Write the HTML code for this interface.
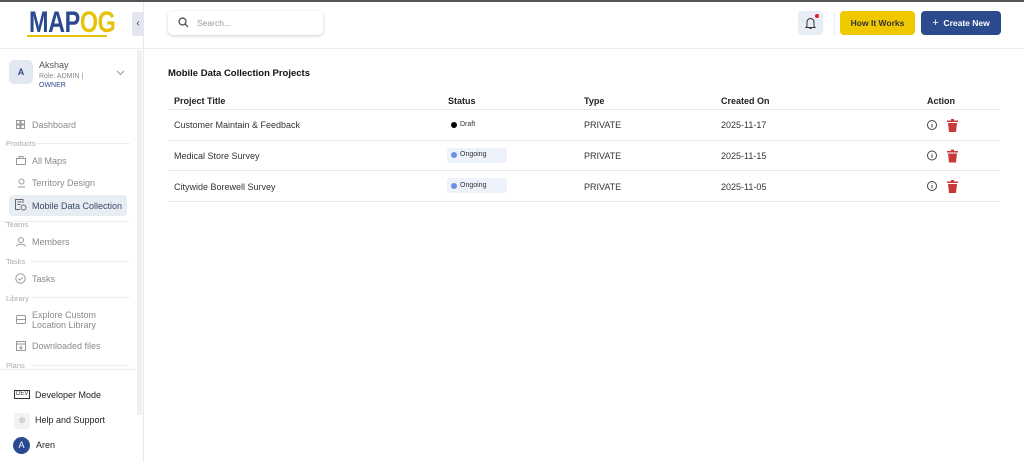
<!DOCTYPE html>
<html><head><style>
*{box-sizing:border-box;margin:0;padding:0}
body{width:1024px;height:462px;overflow:hidden;font-family:"Liberation Sans",sans-serif;background:#fff;position:relative;color:#222}
.a{position:absolute}
.side{left:0;top:0;width:144px;height:462px;border-right:1px solid #e8e8e8;background:#fff}
.nav{font-size:9px;color:#8a8a8a;white-space:nowrap}
.sec{font-size:7.5px;color:#aaa}
.hr{height:1px;background:#eee}
.th{font-size:9px;font-weight:bold;color:#222}
.td{font-size:9px;color:#333}
.rowline{left:168px;width:832px;height:1px;background:#e6e6e6}
.ic{position:absolute;fill:none;stroke:#999;stroke-width:1}
</style></head><body>
<div class="a side"></div>
<div class="a" style="left:0;top:0;width:1024px;height:2px;background:#555"></div>
<div class="a" style="left:29px;top:8px;font-size:30px;font-weight:bold;color:#2a4a8f;letter-spacing:-0.5px;transform:scaleX(0.78);transform-origin:left;line-height:30px">MAP<span style="color:#e8c20a">OG</span></div>
<div class="a" style="left:27px;top:35px;width:80px;height:1.5px;background:#e8c20a"></div>
<div class="a" style="left:132px;top:12px;width:12px;height:24px;background:#e3e6ee;border-radius:3px 0 0 3px;font-size:10px;text-align:center;line-height:24px;color:#333">‹</div>
<div class="a" style="left:0;top:48px;width:143px;height:1px;background:#eee"></div>
<div class="a" style="left:9px;top:60px;width:24px;height:24px;background:#e3e7f2;border-radius:5px;font-size:9px;font-weight:bold;color:#2a4a8f;text-align:center;line-height:24px">A</div>
<div class="a" style="left:39px;top:60px;font-size:9px;color:#555">Akshay</div>
<div class="a" style="left:39px;top:72px;font-size:7px;color:#888;line-height:9px">Role: ADMIN |<br><span style="color:#2a4a8f">OWNER</span></div>
<svg class="ic" style="left:116px;top:70px" width="9" height="6"><path d="M1 1l3.5 3.5L8 1"/></svg>

<svg class="ic" style="left:16px;top:120px" width="9" height="9"><rect x=".5" y=".5" width="3.5" height="3.5"/><rect x="5" y=".5" width="3.5" height="3.5"/><rect x=".5" y="5" width="3.5" height="3.5"/><rect x="5" y="5" width="3.5" height="3.5"/></svg>
<div class="a nav" style="left:32px;top:120px">Dashboard</div>
<div class="a sec" style="left:6px;top:139px">Products</div><div class="a hr" style="left:36px;top:143px;width:94px"></div>
<svg class="ic" style="left:16px;top:156px" width="10" height="9"><rect x=".5" y="2.5" width="9" height="6"/><path d="M3 2.5V.5h4v2"/></svg>
<div class="a nav" style="left:32px;top:156px">All Maps</div>
<svg class="ic" style="left:17px;top:178px" width="9" height="10"><circle cx="4.5" cy="3.5" r="2.5"/><path d="M1 9h7"/></svg>
<div class="a nav" style="left:32px;top:178px">Territory Design</div>
<div class="a" style="left:9px;top:195px;width:118px;height:21px;background:#e8ecf3;border-radius:4px"></div>
<svg class="ic" style="left:15px;top:199px;stroke:#667" width="12" height="12"><path d="M8 4V.5H.5v10H5M2.5 3h4M2.5 5.5h3"/><circle cx="8.5" cy="8.5" r="2.5"/></svg>
<div class="a nav" style="left:32px;top:201px;color:#3a4a6a">Mobile Data Collection</div>
<div class="a hr" style="left:0;top:221px;width:130px"></div>
<div class="a sec" style="left:6px;top:220px">Teams</div>
<svg class="ic" style="left:16px;top:237px" width="10" height="10"><circle cx="5" cy="3" r="2.5"/><path d="M.5 9.5c0-3 9-3 9 0"/></svg>
<div class="a nav" style="left:32px;top:237px">Members</div>
<div class="a sec" style="left:6px;top:257px">Tasks</div><div class="a hr" style="left:30px;top:261px;width:100px"></div>
<svg class="ic" style="left:15px;top:273px" width="11" height="11"><circle cx="5.5" cy="5.5" r="4.7"/><path d="M3.3 5.6l1.6 1.6 3-3"/></svg>
<div class="a nav" style="left:32px;top:274px">Tasks</div>
<div class="a sec" style="left:6px;top:294px">Library</div><div class="a hr" style="left:32px;top:297px;width:98px"></div>
<svg class="ic" style="left:16px;top:315px" width="10" height="9"><rect x=".5" y=".5" width="9" height="8" rx="1"/><path d="M.5 4.5h9"/></svg>
<div class="a nav" style="left:32px;top:310px;line-height:10px">Explore Custom<br>Location Library</div>
<svg class="ic" style="left:16px;top:341px" width="10" height="10"><rect x=".5" y=".5" width="9" height="9"/><path d="M.5 3h9M5 4.5v3.5M3.5 6.5L5 8l1.5-1.5"/></svg>
<div class="a nav" style="left:32px;top:341px">Downloaded files</div>
<div class="a sec" style="left:6px;top:361px">Plans</div><div class="a hr" style="left:30px;top:365px;width:100px"></div>
<div class="a hr" style="left:0;top:369px;width:136px"></div>
<div class="a" style="left:14px;top:390px;font-size:6px;border:1px solid #333;padding:0 1px;color:#333;line-height:7px">DEV</div>
<div class="a" style="left:35px;top:390px;font-size:9px;color:#222">Developer Mode</div>
<div class="a" style="left:14px;top:413px;width:16px;height:16px;background:#f2f2f2;border-radius:3px;font-size:7px;text-align:center;line-height:16px;color:#888">◎</div>
<div class="a" style="left:35px;top:415px;font-size:9px;color:#222">Help and Support</div>
<div class="a" style="left:13px;top:437px;width:17px;height:17px;background:#2a4a8f;border-radius:50%;font-size:9px;color:#fff;text-align:center;line-height:17px">A</div>
<div class="a" style="left:36px;top:440px;font-size:9px;color:#222">Aren</div>
<div class="a" style="left:137px;top:50px;width:5px;height:365px;background:#f0f0f0"></div>

<div class="a" style="left:144px;top:48px;width:880px;height:1px;background:#eee"></div>
<div class="a" style="left:168px;top:11px;width:155px;height:24px;border-radius:5px;box-shadow:0 1px 3px rgba(0,0,0,.2);background:#fff"></div>
<svg class="ic" style="left:178px;top:17px;stroke:#444;stroke-width:1.2" width="11" height="11"><circle cx="4.5" cy="4.5" r="3.5"/><path d="M7 7l3 3"/></svg>
<div class="a" style="left:197px;top:18px;font-size:8.5px;color:#999">Search...</div>
<div class="a" style="left:798px;top:11px;width:25px;height:24px;background:#e8ecf7;border-radius:4px"></div>
<svg class="ic" style="left:804px;top:16px;stroke:#333" width="13" height="14"><path d="M3 10V6a3.5 3.5 0 017 0v4l1 1.5H2zM5.5 12.5h2"/></svg>
<div class="a" style="left:815px;top:14px;width:4px;height:4px;border-radius:50%;background:#d22"></div>
<div class="a" style="left:834px;top:12px;width:1px;height:24px;background:#eee"></div>
<div class="a" style="left:840px;top:11px;width:75px;height:24px;background:#f0c800;border-radius:4px;font-size:8.5px;font-weight:bold;color:#333;text-align:center;line-height:24px">How It Works</div>
<div class="a" style="left:921px;top:11px;width:80px;height:24px;background:#2b4b8e;border-radius:4px;font-size:8.5px;font-weight:bold;color:#fff;text-align:center;line-height:24px"><span style="font-weight:normal;font-size:11px">+</span>&nbsp; Create New</div>

<div class="a" style="left:168px;top:68px;font-size:9.5px;font-weight:bold;color:#111">Mobile Data Collection Projects</div>
<div class="a th" style="left:174px;top:96px">Project Title</div>
<div class="a th" style="left:448px;top:96px">Status</div>
<div class="a th" style="left:584px;top:96px">Type</div>
<div class="a th" style="left:721px;top:96px">Created On</div>
<div class="a th" style="left:927px;top:96px">Action</div>
<div class="a rowline" style="top:109px"></div>
<div class="a rowline" style="top:140px"></div>
<div class="a rowline" style="top:170px"></div>
<div class="a rowline" style="top:201px"></div>

<div class="a td" style="left:174px;top:120px">Customer Maintain &amp; Feedback</div>
<div class="a" style="left:451px;top:122px;width:6px;height:6px;border-radius:50%;background:#000"></div>
<div class="a" style="left:460px;top:121px;font-size:7px;color:#333;line-height:8px">Draft</div>
<div class="a td" style="left:584px;top:120px">PRIVATE</div>
<div class="a td" style="left:721px;top:120px">2025-11-17</div>

<div class="a td" style="left:174px;top:151px">Medical Store Survey</div>
<div class="a" style="left:447px;top:148px;width:60px;height:15px;background:#eef2fb;border-radius:3px"></div>
<div class="a" style="left:451px;top:152px;width:6px;height:6px;border-radius:50%;background:#6a8ee8"></div>
<div class="a" style="left:460px;top:151px;font-size:7px;color:#333;line-height:8px">Ongoing</div>
<div class="a td" style="left:584px;top:151px">PRIVATE</div>
<div class="a td" style="left:721px;top:151px">2025-11-15</div>

<div class="a td" style="left:174px;top:182px">Citywide Borewell Survey</div>
<div class="a" style="left:447px;top:178px;width:60px;height:15px;background:#eef2fb;border-radius:3px"></div>
<div class="a" style="left:451px;top:183px;width:6px;height:6px;border-radius:50%;background:#6a8ee8"></div>
<div class="a" style="left:460px;top:182px;font-size:7px;color:#333;line-height:8px">Ongoing</div>
<div class="a td" style="left:584px;top:182px">PRIVATE</div>
<div class="a td" style="left:721px;top:182px">2025-11-05</div>

<svg class="a" style="left:926px;top:118px" width="36" height="80" viewBox="0 0 36 80">
<g fill="none" stroke="#444" stroke-width="1">
<circle cx="6" cy="7" r="4.5"/><circle cx="6" cy="37.5" r="4.5"/><circle cx="6" cy="68" r="4.5"/>
<path d="M6 6v3.5M6 4.5v.5M6 36.5v3.5M6 35v.5M6 67v3.5M6 65.5v.5"/></g>
<g fill="#c83a3a">
<path d="M25 1h3v1.5h4v1.5h-11v-1.5h4zM22 5h9l-1 9h-7z"/>
<path d="M25 31.5h3v1.5h4v1.5h-11v-1.5h4zM22 35.5h9l-1 9h-7z"/>
<path d="M25 62h3v1.5h4v1.5h-11v-1.5h4zM22 66h9l-1 9h-7z"/></g>
</svg>
</body></html>
